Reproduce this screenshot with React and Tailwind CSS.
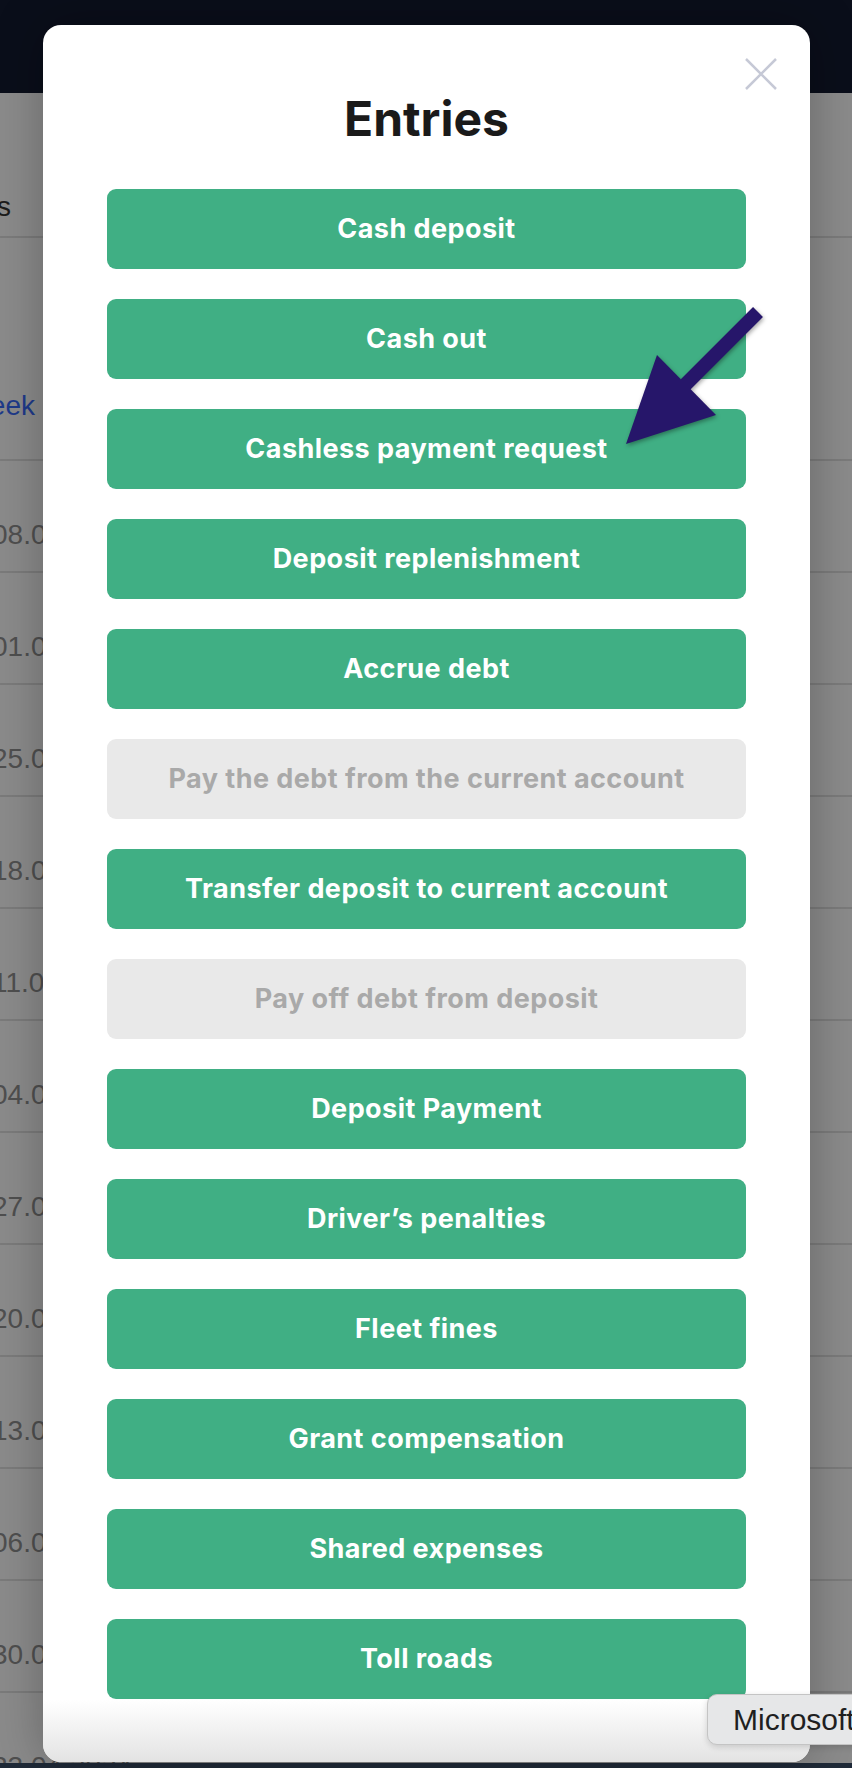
import React from "react";

const entries = [
  { label: "Cash deposit" },
  { label: "Cash out" },
  { label: "Cashless payment request" },
  { label: "Deposit replenishment" },
  { label: "Accrue debt" },
  { label: "Pay the debt from the current account", disabled: true },
  { label: "Transfer deposit to current account" },
  { label: "Pay off debt from deposit", disabled: true },
  { label: "Deposit Payment" },
  { label: "Driver’s penalties" },
  { label: "Fleet fines" },
  { label: "Grant compensation" },
  { label: "Shared expenses" },
  { label: "Toll roads" },
];

const weeks = [
  "08.07.2024", "01.07.2024", "25.06.2024", "18.06.2024", "11.06.2024", "04.06.2024",
  "27.05.2024", "20.05.2024", "13.05.2024", "06.05.2024", "30.04.2024", "23.04.2024",
];

function EntryButton({ label, disabled }) {
  return (
    <button
      disabled={disabled}
      className={
        disabled
          ? "flex h-[80px] w-full items-center justify-center rounded-[9px] bg-[#e9e9e9] text-[27px] font-bold tracking-[0.45px] text-[#a9a9a9]"
          : "flex h-[80px] w-full items-center justify-center rounded-[9px] bg-[#40af84] text-[27px] font-bold tracking-[0.45px] text-white"
      }
    >
      {label}
    </button>
  );
}

function App() {
  return (
    <div className="relative h-[1768px] overflow-hidden bg-[#8b8b8b] font-['Liberation_Sans',sans-serif]">
      {/* page behind the overlay */}
      <div className="h-[93px] bg-[#0a0e1a]" />
      <div className="flex h-[145px] items-end border-b-2 border-[#7b7b7b] pb-[8px]">
        <div className="flex w-[11px] justify-end whitespace-nowrap text-[28px] text-[#1c1c1c]">Weeks</div>
      </div>
      <div className="flex h-[223px] items-end border-b-2 border-[#7b7b7b] pb-[32px]">
        <div className="flex w-[35px] justify-end whitespace-nowrap text-[28px] text-[#1e3a8a]">This week</div>
      </div>
      {weeks.map((w) => (
        <div key={w} className="h-[112px] border-b-2 border-[#7b7b7b] pt-[53px]">
          <div className="ml-[-8px] whitespace-nowrap text-[28px] text-[#4f4f4f]">{w}</div>
        </div>
      ))}
      <div className="absolute inset-x-0 bottom-0 h-[5px] bg-[#1f2a38]" />

      {/* modal */}
      <div className="absolute left-[43px] top-[25px] h-[1737px] w-[767px] overflow-hidden rounded-[18px] bg-white font-['Inter',sans-serif] shadow-[0_0_50px_rgba(0,0,0,0.28)]">
        <button className="absolute right-[33px] top-[33px] h-[32px] w-[32px]">
          <svg viewBox="0 0 32 32" className="h-full w-full">
            <path d="M1 1 L31 31 M31 1 L1 31" stroke="#c6c9d6" strokeWidth="2.5" fill="none" />
          </svg>
        </button>
        <h1 className="pt-[70px] text-center text-[48px] font-bold leading-none text-[#1a1a1a]">Entries</h1>
        <div className="mt-[46px] flex flex-col gap-[30px] px-[64px]">
          {entries.map((e) => (
            <EntryButton key={e.label} label={e.label} disabled={e.disabled} />
          ))}
        </div>
        <div className="pointer-events-none absolute inset-x-0 bottom-0 h-[62px] bg-linear-to-b from-white/0 to-[#e3e3e3]" />
      </div>

      {/* annotation arrow */}
      <svg
        className="absolute left-[600px] top-[290px] h-[170px] w-[180px] drop-shadow-[1px_2px_2px_rgba(0,0,0,0.35)]"
        viewBox="0 0 180 170"
      >
        <line x1="158" y1="22" x2="84" y2="96" stroke="#26166a" strokeWidth="14" />
        <polygon points="26,154 57,65 116,125" fill="#26166a" />
      </svg>

      {/* system tooltip */}
      <div className="absolute left-[707px] top-[1694px] flex h-[51px] w-[180px] items-center whitespace-nowrap rounded-[10px] border border-[#c4c4c4] bg-[#e6e7e8] pl-[25px] text-[30px] text-[#1f1f1f] shadow-[0_2px_6px_rgba(0,0,0,0.15)]">
        Microsoft
      </div>
    </div>
  );
}

export default App;
